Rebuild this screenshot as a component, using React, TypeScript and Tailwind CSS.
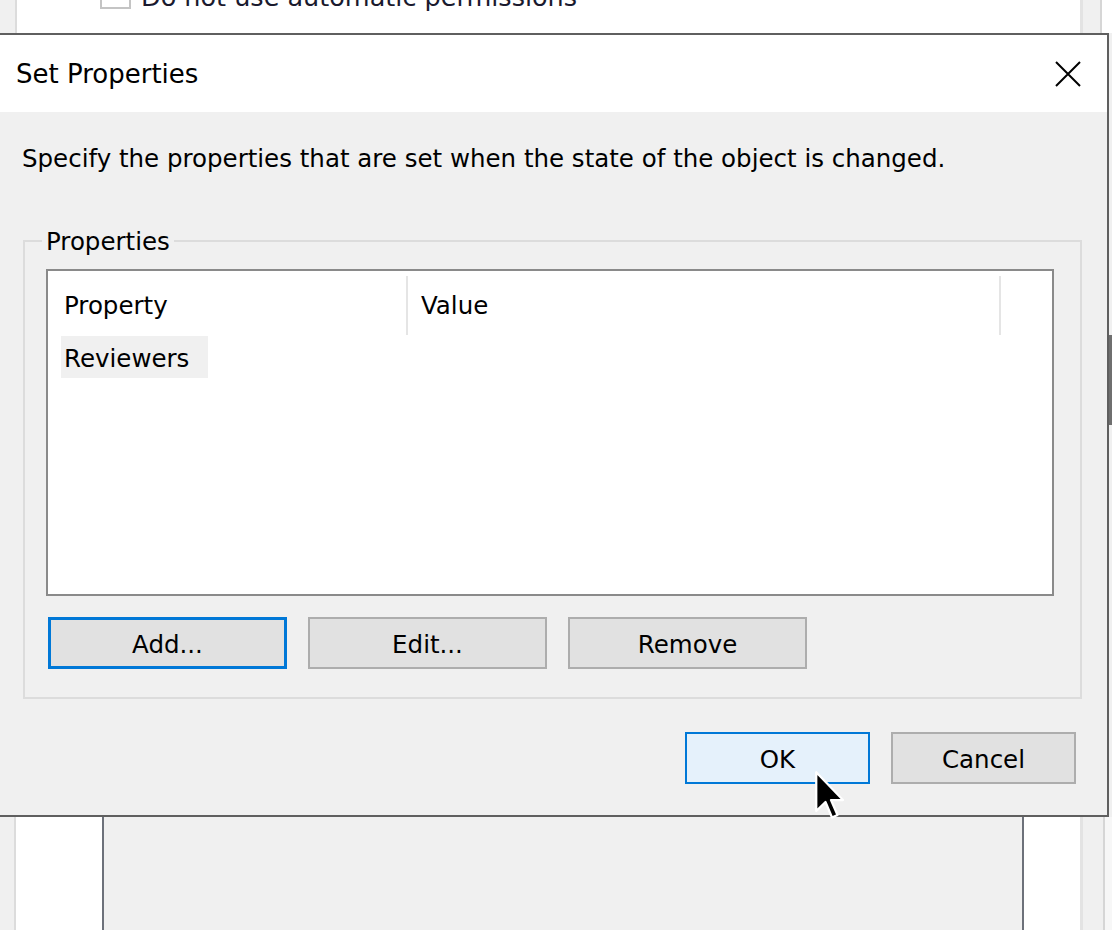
import React from 'react';

const btn = 'h-[52px] w-[239px] flex items-center justify-center pt-[5px] text-[24.5px] text-black bg-[#e1e1e1] border-2 border-[#adadad]';
const dlgBtn = 'h-[52px] w-[185px] flex items-center justify-center pt-[4px] text-[24.5px] text-black border-2';

function Cursor() {
  return (
    <svg className="absolute left-[815px] top-[771px]" width="30" height="50" viewBox="0 0 12 20">
      <path
        d="M0.5 0.5 L0.5 16 L4.2 12.4 L6.8 18.6 L9 17.6 L6.4 11.6 L11.2 11.6 Z"
        fill="#000"
        stroke="#fff"
        strokeWidth="0.9"
        strokeLinejoin="round"
      />
    </svg>
  );
}

export default function App() {
  return (
    <div className="relative w-[1112px] h-[930px] overflow-hidden bg-[#f0f0f0] flex flex-col font-['DejaVu_Sans',sans-serif]">
      {/* window behind, top part */}
      <div className="h-[33px] flex shrink-0">
        <div className="w-[15px] bg-[#f0f0f0]" />
        <div className="w-[2px] bg-[#dcdcdc]" />
        <div className="w-[1063px] bg-white overflow-hidden">
          <div className="flex items-end gap-[10px] pl-[83px] -mt-[22px]">
            <div className="w-[31px] h-[31px] mb-[3px] border-2 border-[#c4c4c4] bg-white" />
            <span className="text-[25.5px] leading-[30px] text-[#1a1a2e]">Do not use automatic permissions</span>
          </div>
        </div>
        <div className="w-[3px] bg-[#e3e3e3]" />
        <div className="w-[17px] bg-[#f0f0f0]" />
        <div className="w-[2px] bg-[#d6d6d6]" />
        <div className="flex-1 bg-white" />
      </div>

      {/* dialog row */}
      <div className="h-[784px] flex shrink-0">
        <div className="w-[1109px] flex flex-col border-t-2 border-r-2 border-b-2 border-[#5f5f5f] bg-[#f0f0f0]">
          {/* title bar */}
          <div className="h-[77px] bg-white flex items-center justify-between pl-[16px] pr-[26px]">
            <span className="pt-[2px] text-[26px] text-black">Set Properties</span>
            <svg width="26" height="26" viewBox="0 0 26 26">
              <path d="M1 1 L25 25 M25 1 L1 25" stroke="#000" strokeWidth="2" fill="none" />
            </svg>
          </div>

          {/* body */}
          <div className="flex-1 flex flex-col pl-[22px] pr-[25px]">
            <p className="mt-[31px] text-[24.5px] leading-[32px] text-black">
              Specify the properties that are set when the state of the object is changed.
            </p>

            {/* group box */}
            <div className="relative mt-[65px] ml-[1px] w-[1059px] h-[459px] border-2 border-[#dcdcdc] px-[21px] pt-[27px]">
              <span className="absolute left-[17px] -top-[16px] px-[4px] bg-[#f0f0f0] text-[24.5px] leading-[32px] text-black">
                Properties
              </span>

              <div className="w-[1008px] h-[327px] border-2 border-[#8a8a8a] bg-white">
                <div className="h-[65px] flex">
                  <div className="w-[358px] flex items-center pl-[16px] pt-[5px] text-[24.5px] text-black">Property</div>
                  <div className="w-[2px] mt-[5px] h-[59px] bg-[#e5e5e5]" />
                  <div className="w-[591px] flex items-center pl-[13px] pt-[5px] text-[24.5px] text-black">Value</div>
                  <div className="w-[2px] mt-[5px] h-[59px] bg-[#e5e5e5]" />
                </div>
                <div className="ml-[13px] w-[147px] h-[42px] bg-[#f0f0f0] flex items-center pl-[3px] pt-[5px] text-[24.5px] text-black">
                  Reviewers
                </div>
              </div>

              <div className="flex gap-[21px] mt-[21px] ml-[2px]">
                <div className={`${btn} !border-[3px] !border-[#0078d7]`}>Add...</div>
                <div className={btn}>Edit...</div>
                <div className={btn}>Remove</div>
              </div>
            </div>

            <div className="flex justify-end gap-[21px] mt-[33px] pr-[6px]">
              <div className={`${dlgBtn} bg-[#e5f1fb] border-[#0078d7]`}>OK</div>
              <div className={`${dlgBtn} bg-[#e1e1e1] border-[#adadad]`}>Cancel</div>
            </div>
          </div>
        </div>
        <div className="flex-1 flex flex-col bg-[#f0f0f0]">
          <div className="h-[302px]" />
          <div className="h-[90px] bg-[#6f6f6f]" />
        </div>
      </div>

      {/* window behind, bottom part */}
      <div className="flex-1 flex">
        <div className="w-[14px] bg-[#f0f0f0]" />
        <div className="w-[2px] bg-[#dcdcdc]" />
        <div className="w-[86px] bg-white" />
        <div className="w-[2px] bg-[#6d717a]" />
        <div className="w-[918px] bg-[#f0f0f0]" />
        <div className="w-[2px] bg-[#6d717a]" />
        <div className="w-[56px] bg-white" />
        <div className="w-[3px] bg-[#e3e3e3]" />
        <div className="w-[20px] bg-[#f0f0f0]" />
        <div className="w-[2px] bg-[#d6d6d6]" />
        <div className="flex-1 bg-[#f7f7f7]" />
      </div>

      <Cursor />
    </div>
  );
}
